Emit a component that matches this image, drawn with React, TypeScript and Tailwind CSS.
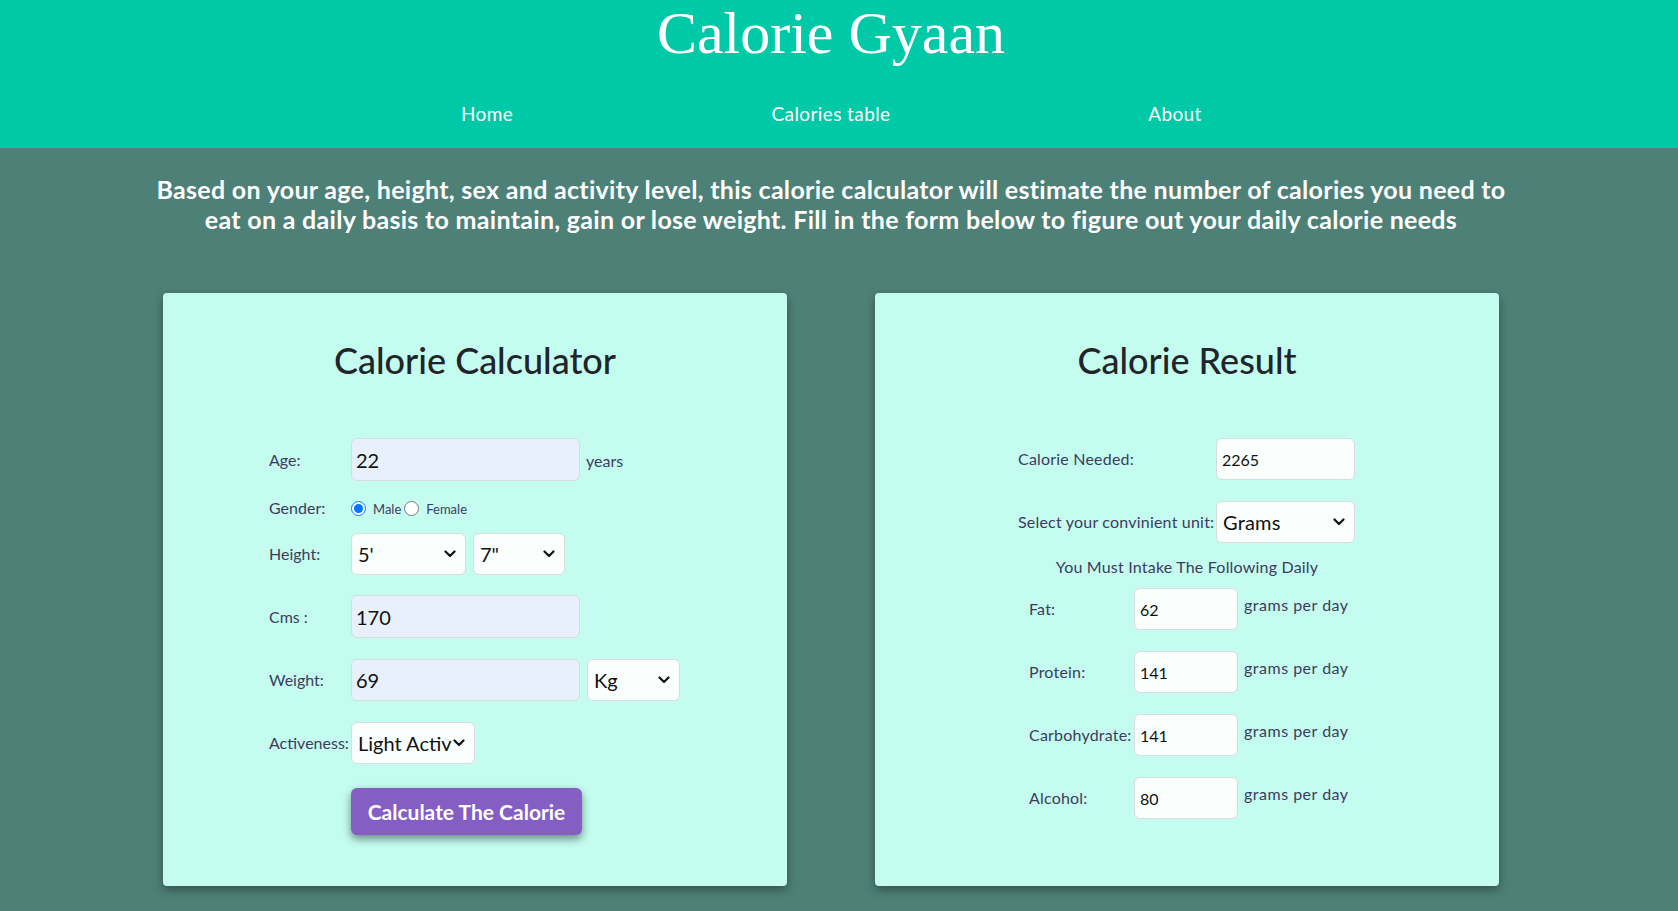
import { useState } from "react";

function Chevron() {
  return (
    <svg
      className="pointer-events-none absolute right-[10px] top-1/2 -translate-y-1/2"
      width="12"
      height="8"
      viewBox="0 0 12 8"
      fill="none"
    >
      <path d="M1.5 1.5 L6 6 L10.5 1.5" stroke="#111" strokeWidth="2.2" strokeLinecap="round" strokeLinejoin="round" />
    </svg>
  );
}

function Select({ value, options, className }: { value: string; options: string[]; className: string }) {
  return (
    <div className={`relative ${className}`}>
      <select
        defaultValue={value}
        className="h-full w-full appearance-none rounded-[6px] border border-[#d9dcdc] bg-[#fafffd] pl-[6px] pr-[20px] text-[20px] text-[#111] outline-none"
      >
        {options.map((o) => (
          <option key={o}>{o}</option>
        ))}
      </select>
      <Chevron />
    </div>
  );
}

const macros = [
  { label: "Fat:", value: "62" },
  { label: "Protein:", value: "141" },
  { label: "Carbohydrate:", value: "141" },
  { label: "Alcohol:", value: "80" },
];

export default function App() {
  const [gender, setGender] = useState("male");

  return (
    <div className="min-h-screen bg-[#4D8076] font-[Lato,sans-serif]">
      {/* Header */}
      <header className="h-[148px] bg-[#00C9A7]">
        <div className="w-[1662px]">
          <h1 className="pt-[3px] text-center font-['Liberation_Serif',serif] text-[60px] leading-[60px] text-white">
            Calorie Gyaan
          </h1>
          <nav className="mx-auto mt-[37px] grid w-[1032px] grid-cols-3 text-center text-[19px] leading-[28px] tracking-[0.4px] text-white">
            <a href="#">Home</a>
            <a href="#">Calories table</a>
            <a href="#">About</a>
          </nav>
        </div>
      </header>

      <main className="w-[1662px] pb-10">
        <p className="mt-[26px] text-center text-[25px] font-bold leading-[30px] tracking-[0.3px] text-white">
          Based on your age, height, sex and activity level, this calorie calculator will estimate the number of calories you need to
          <br />
          eat on a daily basis to maintain, gain or lose weight. Fill in the form below to figure out your daily calorie needs
        </p>

        <div className="mx-auto mt-[59px] flex w-[1336px] gap-[88px]">
          {/* Calculator card */}
          <section className="h-[593px] w-[624px] rounded-[4px] bg-[#C4FCEF] shadow-[0_4px_10px_rgba(0,0,0,0.35)]">
            <h2 className="pt-[46px] text-center text-[36px] font-medium leading-[43px] text-[#212529]">Calorie Calculator</h2>

            <div className="ml-[106px] mt-[56px] flex flex-col text-[16px] text-[#3d3b5e]">
              <div className="flex items-center">
                <label className="w-[82px]">Age:</label>
                <input
                  defaultValue="22"
                  className="h-[43px] w-[229px] rounded-[6px] border border-[#d9dcdc] bg-[#E8F0FE] px-[4px] text-[20px] text-[#111] outline-none"
                />
                <span className="ml-[6px] mt-[2px]">years</span>
              </div>

              <div className="mt-[17px] flex h-[20px] items-center">
                <label className="w-[82px]">Gender:</label>
                <input
                  type="radio"
                  name="gender"
                  checked={gender === "male"}
                  onChange={() => setGender("male")}
                  className="m-0 h-[15px] w-[15px] accent-[#0075ff]"
                />
                <span className="ml-[7px] mt-[3px] text-[13px]">Male</span>
                <input
                  type="radio"
                  name="gender"
                  checked={gender === "female"}
                  onChange={() => setGender("female")}
                  className="m-0 ml-[3px] h-[15px] w-[15px] accent-[#0075ff]"
                />
                <span className="ml-[7px] mt-[3px] text-[13px]">Female</span>
              </div>

              <div className="mt-[15px] flex items-center">
                <label className="w-[82px]">Height:</label>
                <Select value="5'" options={["4'", "5'", "6'"]} className="h-[42px] w-[115px]" />
                <Select value={'7"'} options={['6"', '7"', '8"']} className="ml-[7px] h-[42px] w-[92px]" />
              </div>

              <div className="mt-[20px] flex items-center">
                <label className="w-[82px]">Cms :</label>
                <input
                  defaultValue="170"
                  className="h-[43px] w-[229px] rounded-[6px] border border-[#d9dcdc] bg-[#E8F0FE] px-[4px] text-[20px] text-[#111] outline-none"
                />
              </div>

              <div className="mt-[21px] flex items-center">
                <label className="w-[82px]">Weight:</label>
                <input
                  defaultValue="69"
                  className="h-[42px] w-[229px] rounded-[6px] border border-[#d9dcdc] bg-[#E8F0FE] px-[4px] text-[20px] text-[#111] outline-none"
                />
                <Select value="Kg" options={["Kg", "Lbs"]} className="ml-[7px] h-[42px] w-[93px]" />
              </div>

              <div className="mt-[21px] flex items-center">
                <label className="w-[82px]">Activeness:</label>
                <Select
                  value="Light Activ"
                  options={["Light Activ", "Sedentary", "Moderate", "Very Active"]}
                  className="h-[42px] w-[124px]"
                />
              </div>

              <button className="ml-[82px] mt-[24px] h-[47px] w-[231px] rounded-[6px] bg-[#845EC2] text-[21px] font-bold text-white shadow-[0_4px_8px_rgba(0,0,0,0.45)]">
                Calculate The Calorie
              </button>
            </div>
          </section>

          {/* Result card */}
          <section className="h-[593px] w-[624px] rounded-[4px] bg-[#C4FCEF] shadow-[0_4px_10px_rgba(0,0,0,0.35)]">
            <h2 className="pt-[46px] text-center text-[36px] font-medium leading-[43px] text-[#212529]">Calorie Result</h2>

            <div className="mt-[56px] flex flex-col text-[16px] tracking-[0.2px] text-[#3d3b5e]">
              <div className="ml-[143px] flex items-center">
                <label className="w-[198px]">Calorie Needed:</label>
                <input
                  readOnly
                  value="2265"
                  className="h-[42px] w-[139px] rounded-[6px] border border-[#d9dcdc] bg-[#fafffd] px-[5px] text-[16px] tracking-normal text-[#111] outline-none"
                />
              </div>

              <div className="ml-[143px] mt-[21px] flex items-center">
                <label className="w-[198px]">Select your convinient unit:</label>
                <Select value="Grams" options={["Grams", "Ounces"]} className="h-[42px] w-[139px]" />
              </div>

              <p className="mt-[13px] text-center text-[16px] leading-[22px]">You Must Intake The Following Daily</p>

              <div className="ml-[154px] mt-[10px] flex flex-col gap-[21px]">
                {macros.map((m) => (
                  <div key={m.label} className="flex items-center">
                    <label className="w-[105px]">{m.label}</label>
                    <input
                      readOnly
                      value={m.value}
                      className="h-[42px] w-[104px] rounded-[6px] border border-[#d9dcdc] bg-[#fafffd] px-[5px] text-[16px] tracking-normal text-[#111] outline-none"
                    />
                    <span className="mb-[8px] ml-[6px] tracking-[0.5px]">grams per day</span>
                  </div>
                ))}
              </div>
            </div>
          </section>
        </div>
      </main>
    </div>
  );
}
